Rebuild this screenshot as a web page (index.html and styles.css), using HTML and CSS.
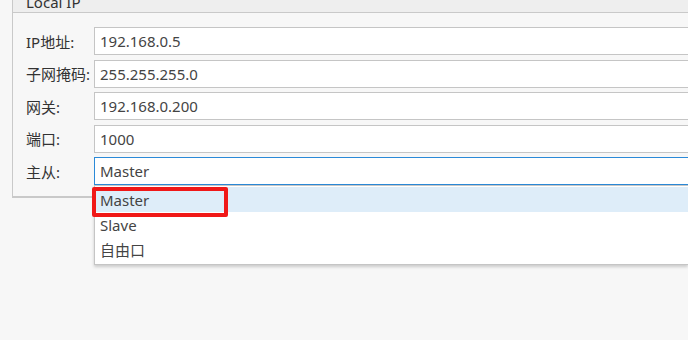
FILE: index.html
```html
<!DOCTYPE html>
<html lang="zh-CN">
<head>
  <meta charset="UTF-8">
  <title>Local IP</title>
  <link rel="stylesheet" href="styles.css">
</head>
<body>

<div class="panel">
  <div class="panel-head"><span>Local IP</span></div>
  <div class="panel-body">
    <div class="form">
      <label>IP地址:</label>
      <div class="field">192.168.0.5</div>

      <label>子网掩码:</label>
      <div class="field">255.255.255.0</div>

      <label>网关:</label>
      <div class="field">192.168.0.200</div>

      <label>端口:</label>
      <div class="field">1000</div>

      <label>主从:</label>
      <div class="select-wrap">
        <div class="field focused">Master</div>
        <ul class="dropdown">
          <li class="selected">Master</li>
          <li>Slave</li>
          <li>自由口</li>
        </ul>
        <div class="mark"></div>
      </div>
    </div>
  </div>
</div>

</body>
</html>
```

FILE: styles.css
```css
body {
  margin: 0;
  width: 688px;
  height: 340px;
  overflow: hidden;
  background: #f7f7f7;
  font-family: "Noto Sans", "Noto Sans CJK SC", sans-serif;
  color: #3a3a3a;
}

.panel {
  margin-left: 12px;
  width: 676px;
}

.panel-head {
  height: 12px;
  background: #eeeeee;
  border-left: 1px solid #c9c9c9;
  overflow: hidden;
  position: relative;
}
.panel-head span {
  position: absolute;
  left: 13px;
  top: -8px;
  font-size: 15px;
  line-height: 20px;
  color: #333;
}

.panel-body {
  border-top: 1px solid #c9c9c9;
  border-left: 1px solid #c9c9c9;
  border-bottom: 2px solid #c9c9c9;
  height: 186px;
  padding: 14px 0 0 13px;
  box-sizing: border-box;
}

.form {
  display: grid;
  grid-template-columns: 68px 1fr;
  row-gap: 4.5px;
  align-items: center;
}

.form label {
  font-size: 15px;
  color: #333;
}

.field {
  height: 28px;
  box-sizing: border-box;
  border: 1px solid #c5c5c5;
  border-right: none;
  background: #fff;
  padding-left: 5px;
  font-size: 15px;
  line-height: 26px;
  color: #444;
}
.field.focused {
  border-color: #2b8ad8;
}

.select-wrap {
  position: relative;
}

.dropdown {
  position: absolute;
  left: 0;
  right: 0;
  top: 28px;
  margin: 0;
  padding: 1px 0 2px;
  list-style: none;
  background: #fff;
  border: 1px solid #c5c5c5;
  border-right: none;
  box-shadow: 0 2px 3px rgba(0, 0, 0, 0.18);
}
.dropdown li {
  height: 25px;
  line-height: 26px;
  padding-left: 5px;
  font-size: 15px;
  color: #444;
}
.dropdown li.selected {
  background: #deedf9;
}

.mark {
  position: absolute;
  left: -2px;
  top: 30px;
  width: 136px;
  height: 30px;
  box-sizing: border-box;
  border: 4px solid #f01818;
  border-radius: 2px;
}
```
